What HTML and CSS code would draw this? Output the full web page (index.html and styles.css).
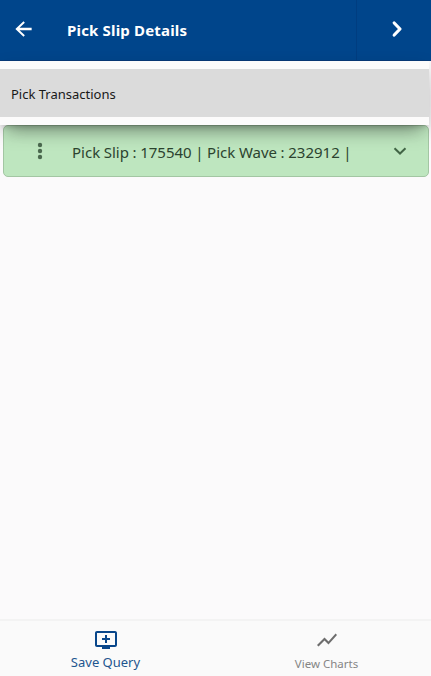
FILE: index.html
```html
<!DOCTYPE html>
<html lang="en">
<head>
<meta charset="utf-8">
<title>Pick Slip Details</title>
<link rel="stylesheet" href="styles.css">
</head>
<body>
<div class="app">
  <header class="toolbar">
    <button class="back" aria-label="Back"><svg width="24" height="24" viewBox="0 0 24 24"><path d="M20.500 10.800H7.830l5.590-5.390L12 3.800l-8.500 8.200 8.500 8.200 1.410-1.610L7.830 13.200H20.500z"/></svg></button>
    <h1 class="title">Pick Slip Details</h1>
    <button class="next" aria-label="Next"><svg width="24" height="24" viewBox="0 0 24 24"><path class="stroke" d="M9.200 6l5.800 6-5.800 6"/></svg></button>
  </header>
  <main class="content">
    <nav class="menu"><a class="menu-item"><span>Pick Transactions</span></a></nav>
    <section class="card">
      <svg class="more" width="24" height="24" viewBox="0 0 24 24"><circle cx="12" cy="6" r="2.200"/><circle cx="12" cy="12" r="2.200"/><circle cx="12" cy="18" r="2.200"/></svg>
      <span class="card-title">Pick Slip : 175540 | Pick Wave : 232912 |</span>
      <svg class="expand" width="18" height="18" viewBox="0 0 18 18"><path d="M3.500 6.300L9 11.500l5.500-5.200"/></svg>
    </section>
  </main>
  <footer class="tabs">
    <a class="tab active">
      <svg width="24" height="24" viewBox="0 0 24 24"><path d="M21 3H3c-1.110 0-2 .89-2 2v12c0 1.100.89 2 2 2h5v2h8v-2h5c1.100 0 1.990-.9 1.990-2L23 5c0-1.110-.9-2-2-2zm0 14H3V5h18v12zm-5-7v2h-3v3h-2v-3H8v-2h3V7h2v3h3z"/></svg>
      <span>Save Query</span>
    </a>
    <a class="tab charts">
      <svg width="24" height="24" viewBox="0 0 24 24"><path d="M3.500 18.490l6-6.010 4 4L22 6.920l-1.410-1.410-7.090 7.970-4-4L2 16.990z"/></svg>
      <span>View Charts</span>
    </a>
  </footer>
</div>
</body>
</html>
```
FILE: styles.css
```css
* { box-sizing: border-box; }
body { margin: 0; font-family: "Noto Sans", "Open Sans", sans-serif; background: #fbfafb; }
.app { display: flex; flex-direction: column; height: 676px; overflow: hidden; }
button { border: 0; padding: 0; background: none; }
svg { display: block; flex: none; }
.toolbar { flex: none; display: flex; align-items: center; height: 61px; background: #00458b; color: #fff; border-bottom: 1px solid #083a78; }
.toolbar svg { fill: #fff; }
.toolbar .stroke { fill: none; stroke: #fff; stroke-width: 3.2; stroke-linecap: round; stroke-linejoin: round; }
.back { width: 67px; padding: 0 0 3px 12px; }
.back svg { width: 23px; height: 24px; }
.title { flex: 1; margin: 0; font-size: 15px; font-weight: 700; letter-spacing: 0.17px; line-height: 20px; white-space: nowrap; }
.next { width: 75px; height: 60px; padding: 0 0 2px 28px; border-left: 1px solid #003d80; }
.content { flex: 1; }
.menu { position: relative; width: 429px; height: 64px; padding: 8px 0; background: #fcfbfb; box-shadow: 0 5px 5px -3px rgba(0,0,0,.15), 0 8px 20px -4px rgba(0,0,0,.35), 0 16px 16px -12px rgba(0,0,0,.15); }
.menu-item { display: flex; align-items: center; height: 48px; padding: 2px 11px 0; background: #dbdbdb; color: #181818; font-size: 13px; white-space: nowrap; }
.card { display: flex; align-items: center; width: 426px; height: 52px; margin-left: 3px; padding: 0 19px 0 24px; background: #bee6bf; border: 1px solid #a3c6a3; border-radius: 5px; }
.more { fill: #4b694f; }
.card-title { flex: 1; margin-left: 20px; padding-top: 2px; color: #2c432f; font-size: 15px; word-spacing: -0.3px; white-space: nowrap; }
.expand { fill: none; stroke: #426546; stroke-width: 2; }
.tabs { flex: none; display: grid; grid-template-columns: 211px 220px; height: 57px; border-top: 2px solid #f3f3f3; background: #fafafa; }
.tab { display: flex; flex-direction: column; align-items: center; padding-top: 7px; color: #858585; font-size: 12px; line-height: 18px; fill: #6d6d6d; white-space: nowrap; }
.tab span { margin-top: 3px; }
.charts { padding-left: 11px; font-size: 11.5px; }
.tab.active { color: #1d568f; fill: #08468a; font-size: 13px; }
.tab.active span { margin-top: 1px; }
```
